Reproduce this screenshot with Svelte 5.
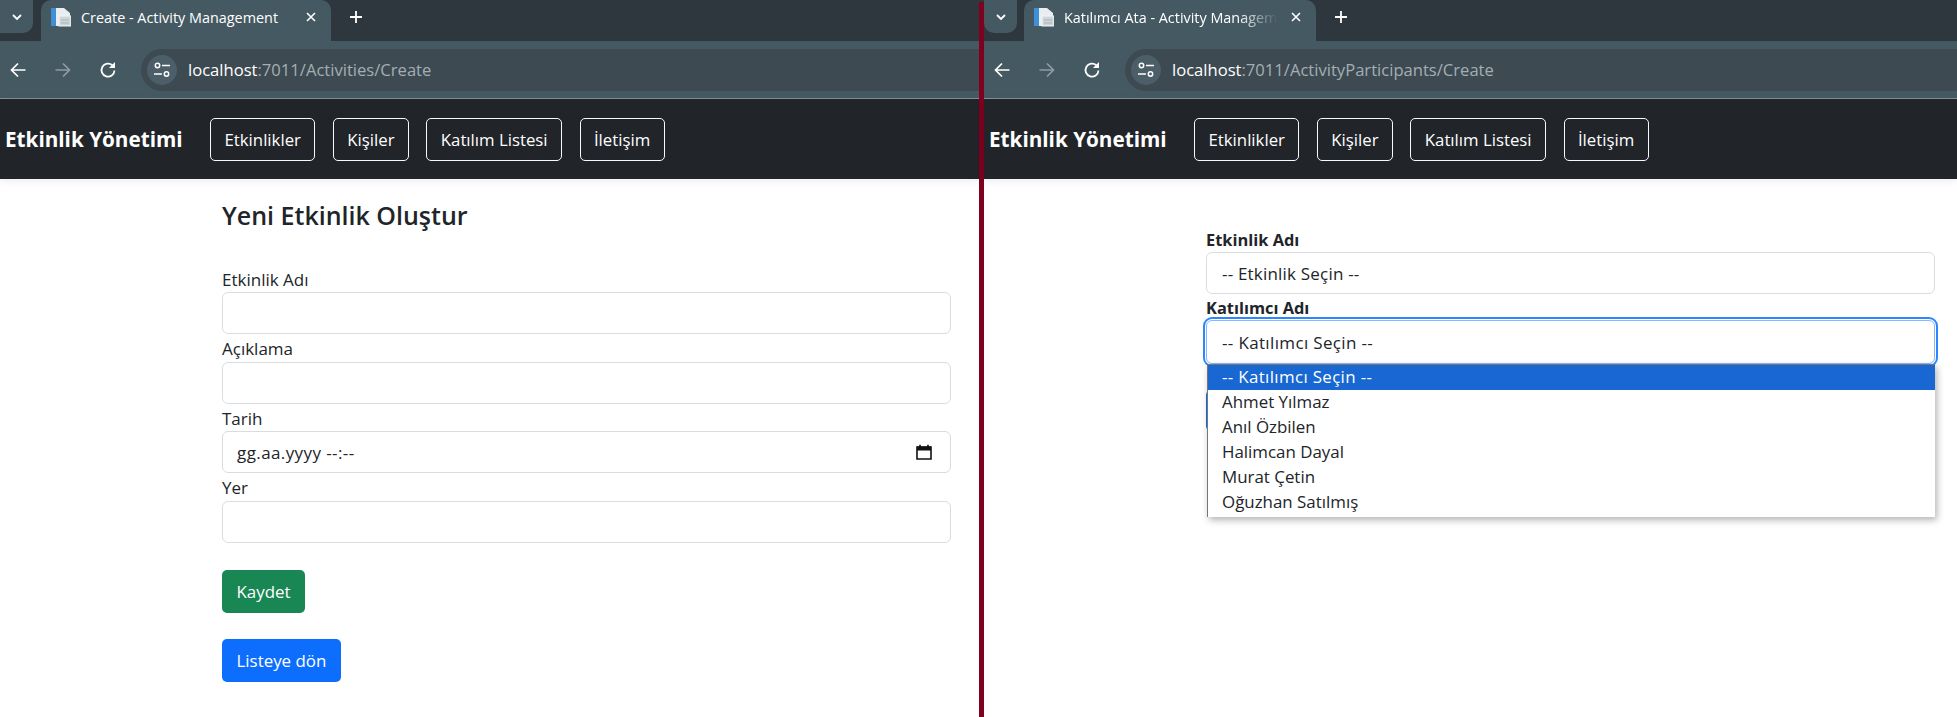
<script>
  const navItems = ['Etkinlikler', 'Kişiler', 'Katılım Listesi', 'İletişim'];
  const participants = ['Ahmet Yılmaz', 'Anıl Özbilen', 'Halimcan Dayal', 'Murat Çetin', 'Oğuzhan Satılmış'];
</script>

{#snippet chrome(title, path, narrow)}
  <div class="strip">
    <button class="tabs-btn" aria-label="Sekmeleri ara">
      <svg width="12" height="12" viewBox="0 0 12 12"><path d="M2 4l4 4 4-4" fill="none" stroke="#fff" stroke-width="1.8"/></svg>
    </button>
    <div class="tab" class:narrow>
      <svg class="favicon" width="20" height="20" viewBox="0 0 20 20">
        <path d="M0 1h13l6 5v13H0z" fill="#e8edf0"/>
        <rect x="0" y="1" width="5" height="18" fill="#3f8fd6"/>
        <rect x="8" y="9" width="12" height="10" fill="#cfd6da" stroke="#f4f6f7" stroke-width="1"/>
        <path d="M10 13h8M10 16h8" stroke="#aab3b8" stroke-width="1"/>
      </svg>
      <span class="tab-title">{title}</span>
      <svg class="close" width="12" height="12" viewBox="0 0 12 12"><path d="M2 2l8 8M10 2l-8 8" stroke="#fff" stroke-width="1.6"/></svg>
    </div>
    <svg class="plus" width="14" height="14" viewBox="0 0 14 14"><path d="M7 1v12M1 7h12" stroke="#fff" stroke-width="1.8"/></svg>
  </div>
  <div class="toolbar">
    <svg class="tool" width="18" height="18" viewBox="0 0 18 18"><path d="M16.5 9H2.500M9 2.500L2.500 9l6.500 6.500" fill="none" stroke="#fff" stroke-width="1.7"/></svg>
    <svg class="tool" width="18" height="18" viewBox="0 0 18 18"><path d="M1.500 9h14M9 2.500l6.500 6.500-6.500 6.500" fill="none" stroke="#8f9ca3" stroke-width="1.7"/></svg>
    <svg class="tool reload" width="18" height="18" viewBox="0 0 18 18"><path d="M15.500 9.500A6.500 6.500 0 1 1 13.300 4.200" fill="none" stroke="#fff" stroke-width="1.8"/><path d="M16 1v6h-6z" fill="#fff"/></svg>
    <div class="omnibox">
      <span class="site">
        <svg width="18" height="16" viewBox="0 0 18 16"><circle cx="4.500" cy="3.500" r="2.200" fill="none" stroke="#fff" stroke-width="1.500"/><path d="M9 3.500h8M1 12h8" stroke="#fff" stroke-width="1.600"/><circle cx="13.500" cy="12" r="2.200" fill="none" stroke="#fff" stroke-width="1.500"/></svg>
      </span>
      <span class="url"><span class="host">localhost</span>:7011/{path}</span>
    </div>
  </div>
  <nav class="navbar">
    <span class="brand">Etkinlik Yönetimi</span>
    {#each navItems as item}
      <a class="nav-btn" href="#top">{item}</a>
    {/each}
  </nav>
{/snippet}

<div class="screen">
  <section class="pane left">
    {@render chrome('Create - Activity Management', 'Activities/Create', false)}
    <main class="content">
      <h3>Yeni Etkinlik Oluştur</h3>
      <form class="form">
        <label for="a">Etkinlik Adı</label>
        <input id="a" class="control" />
        <label for="b">Açıklama</label>
        <input id="b" class="control" />
        <label for="c">Tarih</label>
        <div class="date-wrap">
          <input id="c" class="control date" value="gg.aa.yyyy --:--" />
          <svg class="cal" width="16" height="16" viewBox="0 0 16 16"><path d="M1 3h14v12H1z" fill="none" stroke="#111" stroke-width="1.6"/><rect x="1" y="2.500" width="14" height="4" fill="#111"/><path d="M4 .8v2.500M12 .8v2.500" stroke="#111" stroke-width="1.600"/></svg>
        </div>
        <label for="d">Yer</label>
        <input id="d" class="control" />
      </form>
      <div class="actions">
        <button class="btn green">Kaydet</button>
        <button class="btn blue">Listeye dön</button>
      </div>
    </main>
  </section>

  <div class="divider"></div>

  <section class="pane right">
    {@render chrome('Katılımcı Ata - Activity Management', 'ActivityParticipants/Create', true)}
    <main class="content assign">
      <span class="bold-label">Etkinlik Adı</span>
      <div class="control select">-- Etkinlik Seçin --</div>
      <span class="bold-label second">Katılımcı Adı</span>
      <div class="select-wrap">
        <div class="control select focused">-- Katılımcı Seçin --</div>
        <ul class="dropdown">
          <li class="active">-- Katılımcı Seçin --</li>
          {#each participants as p}
            <li>{p}</li>
          {/each}
        </ul>
      </div>
      <button class="btn blue submit" aria-label="Kaydet"></button>
    </main>
  </section>
</div>

<style>
  :global(body) { margin: 0; background: #fff; overflow: hidden; }
  .screen {
    display: flex;
    width: 1957px;
    height: 717px;
    overflow: hidden;
    font-family: "Open Sans", "Noto Sans", sans-serif;
    color: #212529;
  }
  .pane { display: flex; flex-direction: column; min-width: 0; }
  .left { width: 979px; flex: none; }
  .right { flex: 1; }
  .divider {
    width: 5px;
    flex: none;
    background: #800020;
    border-top: 2px solid #2e373e;
  }

  .strip {
    height: 41px;
    background: #2e373e;
    display: flex;
    align-items: flex-start;
    flex: none;
  }
  .tabs-btn {
    width: 33px;
    height: 33px;
    margin-right: 8px;
    padding: 0;
    border: 0;
    border-radius: 0 0 10px 0;
    background: #455962;
    display: flex;
    align-items: center;
    justify-content: center;
  }
  .right .tabs-btn { border-radius: 0 0 10px 10px; margin-right: 7px; }
  .tab {
    width: 290px;
    height: 41px;
    flex: none;
    box-sizing: border-box;
    background: #455962;
    border-radius: 10px 10px 0 0;
    display: flex;
    align-items: center;
    padding: 0 14px 7px 10px;
    color: #fff;
    font-size: 14.4px;
  }
  .narrow { width: 292px; }
  .favicon { flex: none; margin-right: 10px; }
  .tab-title {
    flex: 1;
    white-space: nowrap;
    overflow: hidden;
  }
  .narrow .tab-title {
    -webkit-mask-image: linear-gradient(90deg, #000 80%, transparent 98%);
    mask-image: linear-gradient(90deg, #000 80%, transparent 98%);
  }
  .close { flex: none; margin-left: 8px; }
  .plus { margin: 10px 0 0 18px; }

  .toolbar {
    height: 58px;
    flex: none;
    box-sizing: border-box;
    background: #455962;
    border-bottom: 1px solid #82919a;
    display: flex;
    align-items: center;
    padding: 0 0 0 9px;
  }
  .tool { flex: none; margin-right: 27px; }
  .tool.reload { margin-right: 24px; }
  .omnibox {
    flex: 1;
    height: 42px;
    background: #3d4a52;
    border-radius: 21px 0 0 21px;
    display: flex;
    align-items: center;
    padding-left: 6px;
    font-size: 16.6px;
    color: #a4aeb4;
  }
  .site {
    width: 30px;
    height: 30px;
    border-radius: 50%;
    background: #4c5e67;
    display: flex;
    align-items: center;
    justify-content: center;
    margin-right: 11px;
  }
  .host { color: #fff; }

  .navbar {
    height: 80px;
    flex: none;
    box-sizing: border-box;
    background: #212529;
    box-shadow: 0 2px 8px rgba(0, 0, 0, 0.08);
    display: flex;
    align-items: center;
    padding: 0 0 0 5px;
    position: relative;
  }
  .brand {
    font-size: 20.7px;
    font-weight: 700;
    color: #fff;
    margin-right: 27.500px;
    white-space: nowrap;
  }
  .nav-btn {
    height: 43px;
    box-sizing: border-box;
    display: flex;
    align-items: center;
    padding: 0 13.400px;
    margin-right: 17.500px;
    border: 1px solid #f8f9fa;
    border-radius: 5px;
    color: #fff;
    text-decoration: none;
    font-size: 16.8px;
    white-space: nowrap;
  }

  .content { padding: 0 28px 0 222px; }
  h3 {
    margin: 20px 0 0;
    font-size: 25px;
    line-height: 33px;
    font-weight: 600;
  }
  .form { margin-top: 33px; }
  label, .bold-label {
    display: block;
    height: 27.400px;
    line-height: 29px;
    font-size: 17px;
  }
  .control {
    display: block;
    width: 100%;
    height: 42px;
    box-sizing: border-box;
    border: 1px solid #d9dde2;
    border-radius: 6px;
    padding: 0 14px;
    font: inherit;
    font-size: 17px;
    color: #212529;
    background: #fff;
  }
  .date { letter-spacing: 0.4px; }
  .date-wrap { position: relative; }
  .cal { position: absolute; right: 19px; top: 13px; }
  .actions {
    display: flex;
    flex-direction: column;
    align-items: flex-start;
    gap: 26.500px;
    margin-top: 27.500px;
  }
  .btn {
    height: 42.500px;
    border: 0;
    border-radius: 5px;
    padding: 0 14.500px;
    color: #fff;
    font: inherit;
    font-size: 16.9px;
  }
  .green { background: #198754; }
  .blue { background: #0d6efd; }

  .assign { padding-top: 46px; padding-right: 22px; }
  .bold-label { font-weight: 700; font-size: 16.4px; }
  .second { margin-top: -1.300px; }
  .select { display: flex; align-items: center; padding-left: 15px; letter-spacing: 0.2px; }
  .select-wrap { position: relative; }
  .focused {
    height: 44px;
    border-color: #86b7fe;
    outline: 2.500px solid #2b87ff;
    outline-offset: 1px;
    letter-spacing: 0.35px;
  }
  .dropdown {
    position: absolute;
    left: 1px;
    right: 0;
    top: 43.500px;
    margin: 0;
    padding: 0 0 2px;
    list-style: none;
    background: #fff;
    border-left: 1px solid #767676;
    border-top: 1px solid #767676;
    box-shadow: 2px 3px 7px rgba(0, 0, 0, 0.3);
    font-size: 16.9px;
  }
  .dropdown li {
    height: 25px;
    line-height: 24px;
    padding-left: 14px;
  }
  .dropdown .active { background: #1967d2; color: #fff; letter-spacing: 0.35px; }
  .submit { display: block; margin-top: 26px; height: 41px; width: 110px; }
</style>
